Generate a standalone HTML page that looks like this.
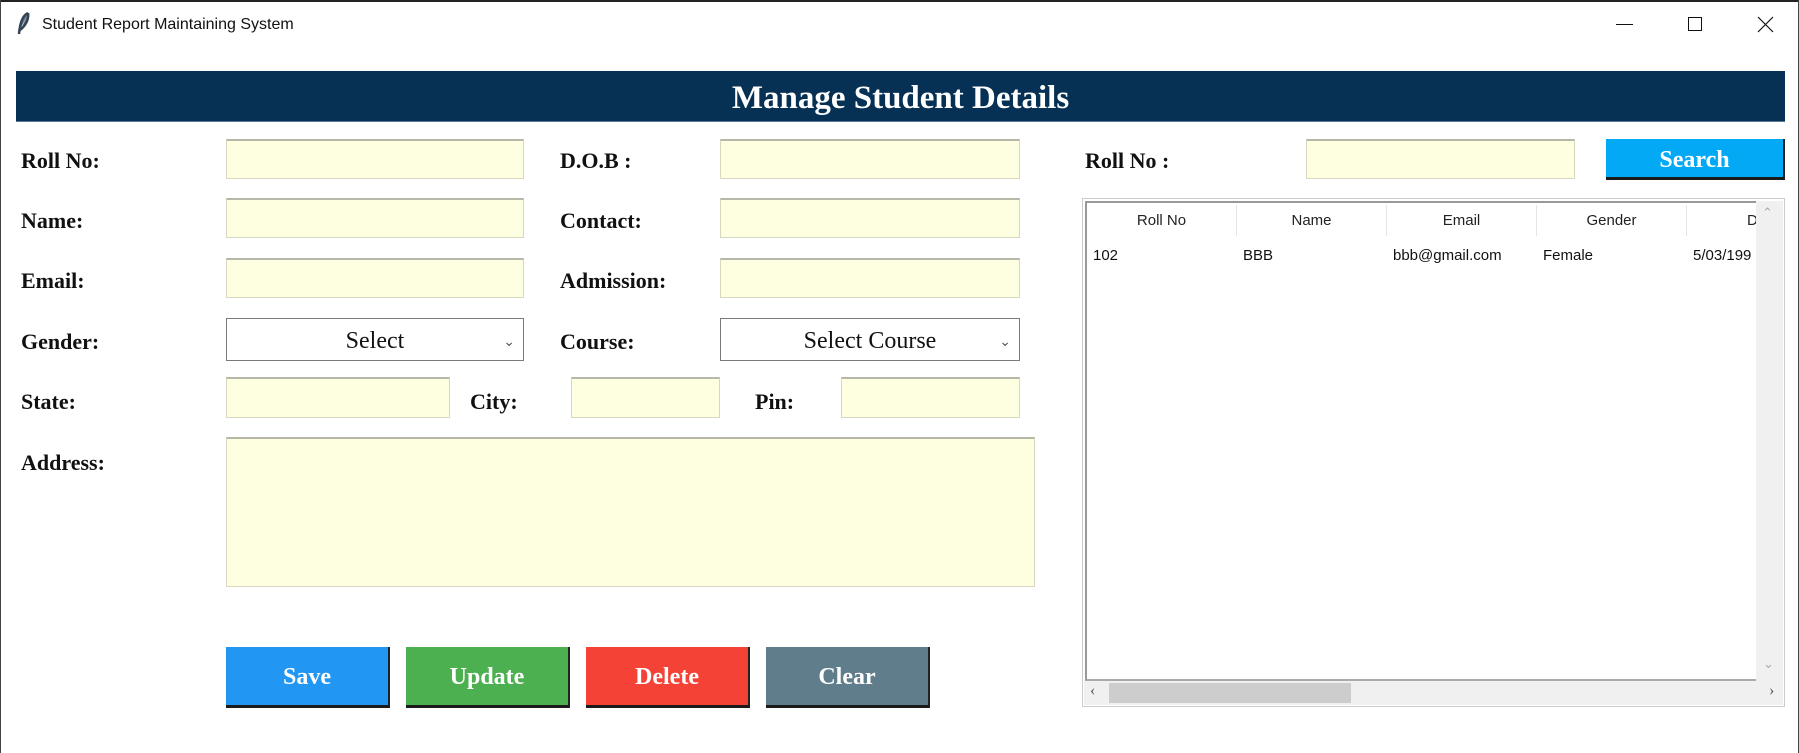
<!DOCTYPE html>
<html><head><meta charset="utf-8"><style>
*{margin:0;padding:0;box-sizing:border-box}
body{width:1799px;height:753px;background:#fff;position:relative;overflow:hidden;font-family:"Liberation Serif",serif}
.a{position:absolute}
.lbl{position:absolute;font-family:"Liberation Serif",serif;font-weight:bold;font-size:22px;color:#111;line-height:1}
.ent{position:absolute;background:#fefee0;border:1px solid #d8d8c0;border-top:2px solid #b8b8a8}
.cmb{position:absolute;background:#fff;border:1px solid #7a7a7a;font-size:24px;font-family:"Liberation Serif",serif;color:#111;text-align:center;line-height:44px}
.cmb span{position:absolute;right:8px;top:0;font-size:14px;font-family:"Liberation Sans",sans-serif;color:#555}
.btn{position:absolute;color:#fff;font-weight:bold;font-size:24px;text-align:center;line-height:60px;border-bottom:3px solid #1a1a1a;border-right:2px solid #222}
.th{position:absolute;top:2px;height:31px;line-height:31px;text-align:center;font-family:"Liberation Sans",sans-serif;font-size:15px;color:#222;border-right:1px solid #e5e5e5;width:150px}
.td{position:absolute;top:44px;font-family:"Liberation Sans",sans-serif;font-size:15px;color:#111}
</style></head><body>
<div class="a" style="left:0;top:0;width:1799px;height:2px;background:#222"></div>
<div class="a" style="left:0;top:0;width:1px;height:753px;background:#444"></div>
<div class="a" style="left:1798px;top:0;width:1px;height:753px;background:#444"></div>
<svg class="a" style="left:16px;top:12px" width="16" height="24"><path d="M12 1 C6 4 4 12 3 22 M12 1 C13 8 9 14 4 18" stroke="#345" stroke-width="2.5" fill="#678"/></svg>
<div class="a" style="left:42px;top:16px;font-family:'Liberation Sans',sans-serif;font-size:16px;color:#111">Student Report Maintaining System</div>
<div class="a" style="left:1616px;top:24px;width:17px;height:1px;background:#111"></div>
<div class="a" style="left:1688px;top:17px;width:14px;height:14px;border:1px solid #111"></div>
<svg class="a" style="left:1757px;top:16px" width="17" height="17"><path d="M1 1L16 16M16 1L1 16" stroke="#111" stroke-width="1.2"/></svg>

<div class="a" style="left:16px;top:71px;width:1769px;height:51px;background:#063054;border-bottom:1px solid #5a7a9a"></div>
<div class="a" style="left:16px;top:76px;width:1769px;text-align:center;color:#fff;font-size:33px;font-weight:bold;line-height:44px">Manage Student Details</div>

<div class="lbl" style="left:21px;top:150px">Roll No:</div>
<div class="lbl" style="left:21px;top:210px">Name:</div>
<div class="lbl" style="left:21px;top:270px">Email:</div>
<div class="lbl" style="left:21px;top:331px">Gender:</div>
<div class="lbl" style="left:21px;top:391px">State:</div>
<div class="lbl" style="left:21px;top:452px">Address:</div>
<div class="lbl" style="left:560px;top:150px">D.O.B :</div>
<div class="lbl" style="left:560px;top:210px">Contact:</div>
<div class="lbl" style="left:560px;top:270px">Admission:</div>
<div class="lbl" style="left:560px;top:331px">Course:</div>
<div class="lbl" style="left:470px;top:391px">City:</div>
<div class="lbl" style="left:755px;top:391px">Pin:</div>

<div class="ent" style="left:226px;top:139px;width:298px;height:40px"></div>
<div class="ent" style="left:226px;top:198px;width:298px;height:40px"></div>
<div class="ent" style="left:226px;top:258px;width:298px;height:40px"></div>
<div class="ent" style="left:720px;top:139px;width:300px;height:40px"></div>
<div class="ent" style="left:720px;top:198px;width:300px;height:40px"></div>
<div class="ent" style="left:720px;top:258px;width:300px;height:40px"></div>
<div class="cmb" style="left:226px;top:318px;width:298px;height:43px">Select<span>&#8964;</span></div>
<div class="cmb" style="left:720px;top:318px;width:300px;height:43px">Select Course<span>&#8964;</span></div>
<div class="ent" style="left:226px;top:377px;width:224px;height:41px"></div>
<div class="ent" style="left:571px;top:377px;width:149px;height:41px"></div>
<div class="ent" style="left:841px;top:377px;width:179px;height:41px"></div>
<div class="ent" style="left:226px;top:437px;width:809px;height:150px"></div>

<div class="btn" style="left:226px;top:647px;width:164px;height:61px;background:#2196f3">Save</div>
<div class="btn" style="left:406px;top:647px;width:164px;height:61px;background:#4caf50">Update</div>
<div class="btn" style="left:586px;top:647px;width:164px;height:61px;background:#f44336">Delete</div>
<div class="btn" style="left:766px;top:647px;width:164px;height:61px;background:#607d8b">Clear</div>

<div class="lbl" style="left:1085px;top:150px">Roll No :</div>
<div class="ent" style="left:1306px;top:139px;width:269px;height:40px"></div>
<div class="btn" style="left:1606px;top:139px;width:179px;height:41px;line-height:42px;background:#03a9f4;font-size:24px">Search</div>

<div class="a" style="left:1082px;top:198px;width:703px;height:509px;border:1px solid #ccc;background:#fff">
 <div class="a" style="left:2px;top:2px;width:672px;height:480px;border:2px solid #999;border-right:none;border-bottom:2px solid #aaa;overflow:hidden">
  <div class="th" style="left:0">Roll No</div>
  <div class="th" style="left:150px">Name</div>
  <div class="th" style="left:300px">Email</div>
  <div class="th" style="left:450px">Gender</div>
  <div class="th" style="left:600px;text-align:left;padding-left:60px">D.O</div>
  <div class="td" style="left:6px">102</div>
  <div class="td" style="left:156px">BBB</div>
  <div class="td" style="left:306px">bbb@gmail.com</div>
  <div class="td" style="left:456px">Female</div>
  <div class="td" style="left:606px">5/03/199</div>
 </div>
 <div class="a" style="left:673px;top:2px;width:27px;height:480px;background:#f0f0f0"><div class="a" style="left:6px;top:4px;font-size:13px;color:#aaa;font-family:'Liberation Sans',sans-serif">&#8963;</div><div class="a" style="left:7px;top:455px;font-size:13px;color:#aaa;font-family:'Liberation Sans',sans-serif">&#8964;</div></div>
 <div class="a" style="left:1px;top:482px;width:699px;height:24px;background:#f0f0f0"><div class="a" style="left:25px;top:2px;width:242px;height:20px;background:#cdcdcd"></div><div class="a" style="left:6px;top:1px;font-size:16px;color:#555">&#8249;</div><div class="a" style="left:685px;top:1px;font-size:16px;color:#555">&#8250;</div></div>
</div>
</body></html>
